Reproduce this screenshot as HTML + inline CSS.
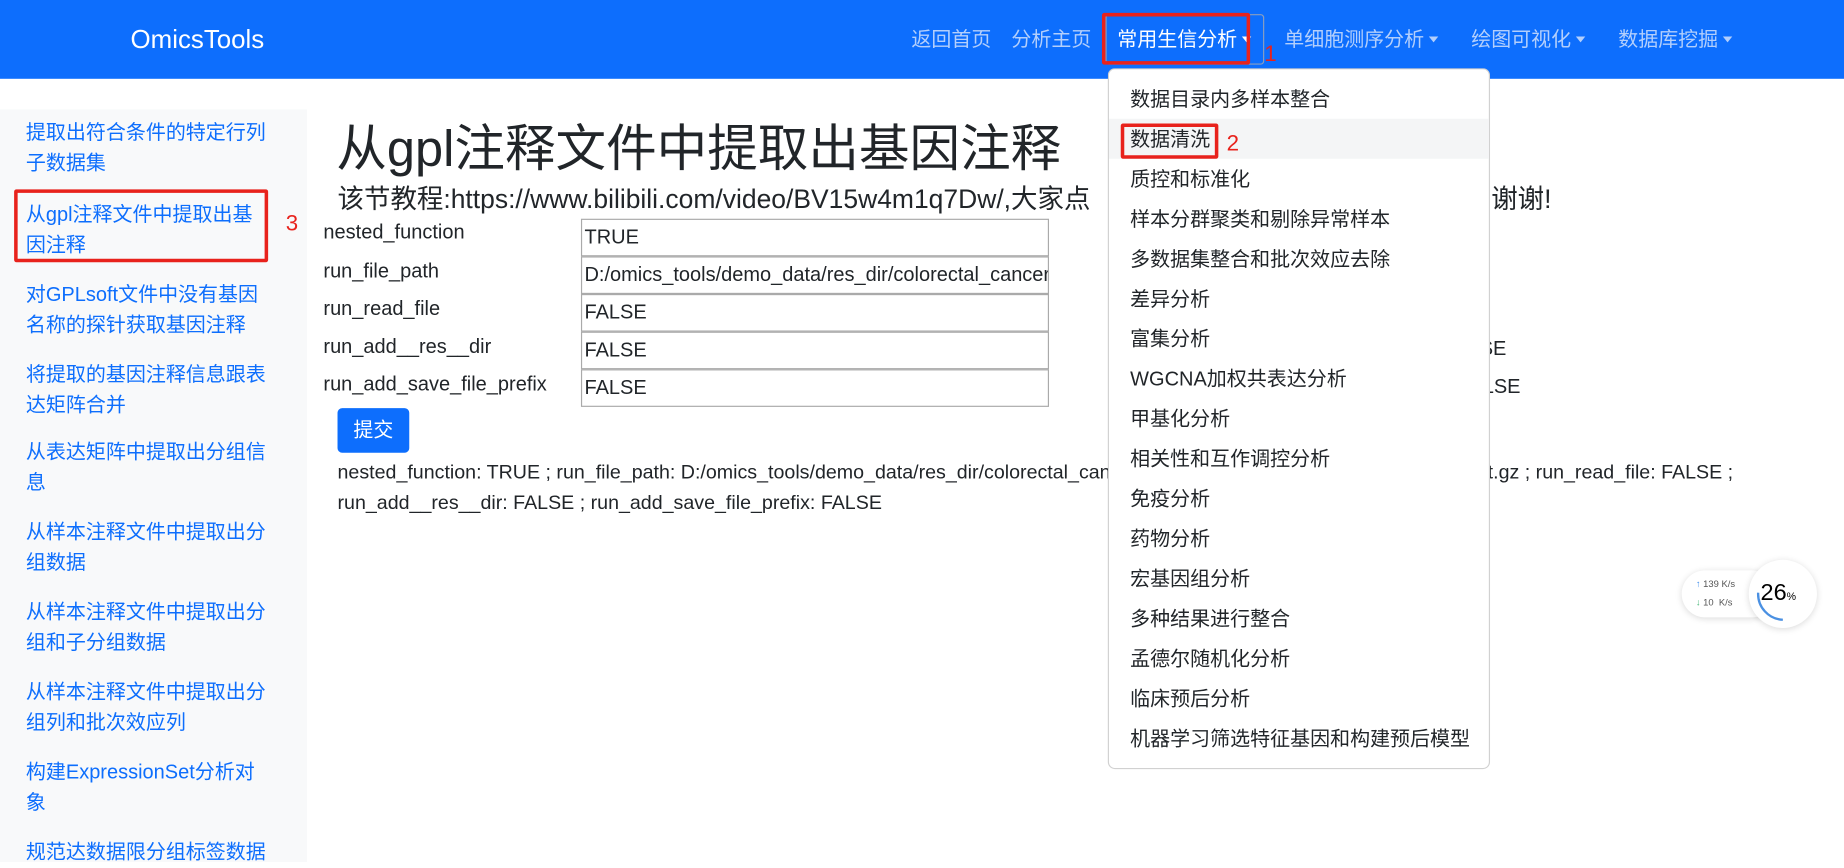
<!DOCTYPE html>
<html><head><meta charset="utf-8">
<style>
html,body{margin:0;padding:0;width:1844px;height:850px;overflow:hidden;background:#fff}
#w{position:absolute;left:0;top:0;width:1568px;height:723px;transform:scale(1.17602);transform-origin:0 0;font-family:"Liberation Sans","Noto Sans CJK SC",sans-serif;color:#212529}
.a{position:absolute;white-space:nowrap}
.nav{position:absolute;left:0;top:0;width:1568px;height:67px;background:#0d6efd}
.nl{position:absolute;top:19px;font-size:17px;color:#b3cffc}
.car{display:inline-block;width:0;height:0;border-left:4px solid transparent;border-right:4px solid transparent;border-top:5px solid currentColor;vertical-align:3px;margin-left:4px}
.side{position:absolute;left:0;top:93px;width:261px;height:640px;background:#f8f9fa}
.sl{position:absolute;left:22px;width:205px;font-size:17px;line-height:26px;color:#0d6efd;white-space:normal}
.lab{position:absolute;left:275px;font-size:17px}
.inp{position:absolute;left:494px;width:394px;height:30px;border:1px solid #aaa;font-size:17px;line-height:30px;padding-left:2px;box-sizing:content-box;overflow:hidden;white-space:nowrap}
.dd{position:absolute;left:942px;top:58px;width:323px;height:594px;background:#fff;border:1px solid rgba(0,0,0,.18);border-radius:6px}
.di{position:absolute;left:18px;font-size:17px;color:#212529;white-space:nowrap}
.red{position:absolute;border:3px solid #e8221c;border-radius:2px;box-sizing:border-box}
.rn{position:absolute;color:#e8221c;font-size:19px}
</style></head><body><div id="w">
<div class="nav">
<div class="a" style="left:111px;top:21px;font-size:22px;color:#fff">OmicsTools</div>
<div class="nl" style="left:775px">返回首页</div>
<div class="nl" style="left:860px">分析主页</div>
<div class="a" style="left:940px;top:12px;width:135px;height:43px;border:1px solid #8a9fbf;border-radius:3px;box-sizing:border-box"></div>
<div class="nl" style="left:950px;color:#fff">常用生信分析<span class="car"></span></div>
<div class="nl" style="left:1092px">单细胞测序分析<span class="car"></span></div>
<div class="nl" style="left:1251px">绘图可视化<span class="car"></span></div>
<div class="nl" style="left:1376px">数据库挖掘<span class="car"></span></div>
</div>
<div class="red" style="left:937px;top:11px;width:126px;height:44px"></div>
<div class="rn" style="left:1075px;top:36px">1</div>

<div class="side">
<div class="sl" style="top:7px">提取出符合条件的特定行列子数据集</div>
<div class="sl" style="top:77px">从gpl注释文件中提取出基因注释</div>
<div class="sl" style="top:145px">对GPLsoft文件中没有基因名称的探针获取基因注释</div>
<div class="sl" style="top:213px">将提取的基因注释信息跟表达矩阵合并</div>
<div class="sl" style="top:279px">从表达矩阵中提取出分组信息</div>
<div class="sl" style="top:347px">从样本注释文件中提取出分组数据</div>
<div class="sl" style="top:415px">从样本注释文件中提取出分组和子分组数据</div>
<div class="sl" style="top:483px">从样本注释文件中提取出分组列和批次效应列</div>
<div class="sl" style="top:551px;width:200px">构建ExpressionSet分析对象</div>
<div class="sl" style="top:619px">规范达数据限分组标签数据</div>
</div>
<div class="red" style="left:12px;top:161px;width:216px;height:62px"></div>
<div class="rn" style="left:243px;top:180px">3</div>

<div class="a" style="left:286px;top:92px;font-size:43px;color:#212529">从gpl注释文件中提取出基因注释</div>
<div class="a" style="left:287px;top:152px;font-size:22.5px">该节教程:https://www.bilibili.com/video/BV15w4m1q7Dw/,大家点</div>
<div class="a" style="left:1268px;top:152px;font-size:22.5px">谢谢!</div>

<div class="lab" style="top:188px">nested_function</div>
<div class="lab" style="top:221px">run_file_path</div>
<div class="lab" style="top:253px">run_read_file</div>
<div class="lab" style="top:285px">run_add__res__dir</div>
<div class="lab" style="top:317px">run_add_save_file_prefix</div>
<div class="inp" style="top:186px">TRUE</div>
<div class="inp" style="top:218px">D:/omics_tools/demo_data/res_dir/colorectal_cancer</div>
<div class="inp" style="top:250px">FALSE</div>
<div class="inp" style="top:282px">FALSE</div>
<div class="inp" style="top:314px">FALSE</div>
<div class="a" style="left:1228px;top:287px;font-size:17px">FALSE</div>
<div class="a" style="left:1240px;top:319px;font-size:17px">FALSE</div>

<div class="a" style="left:287px;top:347px;width:61px;height:38px;background:#0d6efd;border-radius:4px;color:#fff;font-size:17px;line-height:38px;text-align:center">提交</div>
<div class="a" style="left:287px;top:389px;font-size:16.7px;line-height:26px">nested_function: TRUE ; run_file_path: D:/omics_tools/demo_data/res_dir/colorectal_cancer/GSE<br>run_add__res__dir: FALSE ; run_add_save_file_prefix: FALSE</div>
<div class="a" style="left:1265px;top:389px;font-size:16.7px;line-height:26px">t.gz ; run_read_file: FALSE ;</div>

<div class="dd">
<div class="a" style="left:0;top:42px;width:323px;height:34px;background:#f4f5f6"></div>
<div class="di" style="top:11px">数据目录内多样本整合</div>
<div class="di" style="top:45px">数据清洗</div>
<div class="di" style="top:79px">质控和标准化</div>
<div class="di" style="top:113px">样本分群聚类和剔除异常样本</div>
<div class="di" style="top:147px">多数据集整合和批次效应去除</div>
<div class="di" style="top:181px">差异分析</div>
<div class="di" style="top:215px">富集分析</div>
<div class="di" style="top:249px">WGCNA加权共表达分析</div>
<div class="di" style="top:283px">甲基化分析</div>
<div class="di" style="top:317px">相关性和互作调控分析</div>
<div class="di" style="top:351px">免疫分析</div>
<div class="di" style="top:385px">药物分析</div>
<div class="di" style="top:419px">宏基因组分析</div>
<div class="di" style="top:453px">多种结果进行整合</div>
<div class="di" style="top:487px">孟德尔随机化分析</div>
<div class="di" style="top:521px">临床预后分析</div>
<div class="di" style="top:555px">机器学习筛选特征基因和构建预后模型</div>
</div>
<div class="red" style="left:953px;top:105px;width:83px;height:30px"></div>
<div class="rn" style="left:1043px;top:112px">2</div>

<div class="a" style="left:1430px;top:485px;width:80px;height:40px;background:#fff;border-radius:20px;box-shadow:0 1px 6px rgba(0,0,0,.15)"></div>
<div class="a" style="left:1442px;top:492px;font-size:8px;color:#555"><span style="color:#3b8beb">↑</span> 139 K/s</div>
<div class="a" style="left:1442px;top:508px;font-size:8px;color:#555"><span style="color:#3cb371">↓</span> 10&nbsp; K/s</div>
<div class="a" style="left:1487px;top:476px;width:58px;height:58px;background:#fff;border-radius:50%;box-shadow:0 1px 6px rgba(0,0,0,.15)"></div>
<svg class="a" style="left:1487px;top:476px" width="58" height="58"><path d="M29 51 A22 22 0 0 1 8 28" fill="none" stroke="#4a90e2" stroke-width="2"/></svg>
<div class="a" style="left:1497px;top:493px;font-size:20px;color:#000">26<span style="font-size:9px">%</span></div>
</div></body></html>
